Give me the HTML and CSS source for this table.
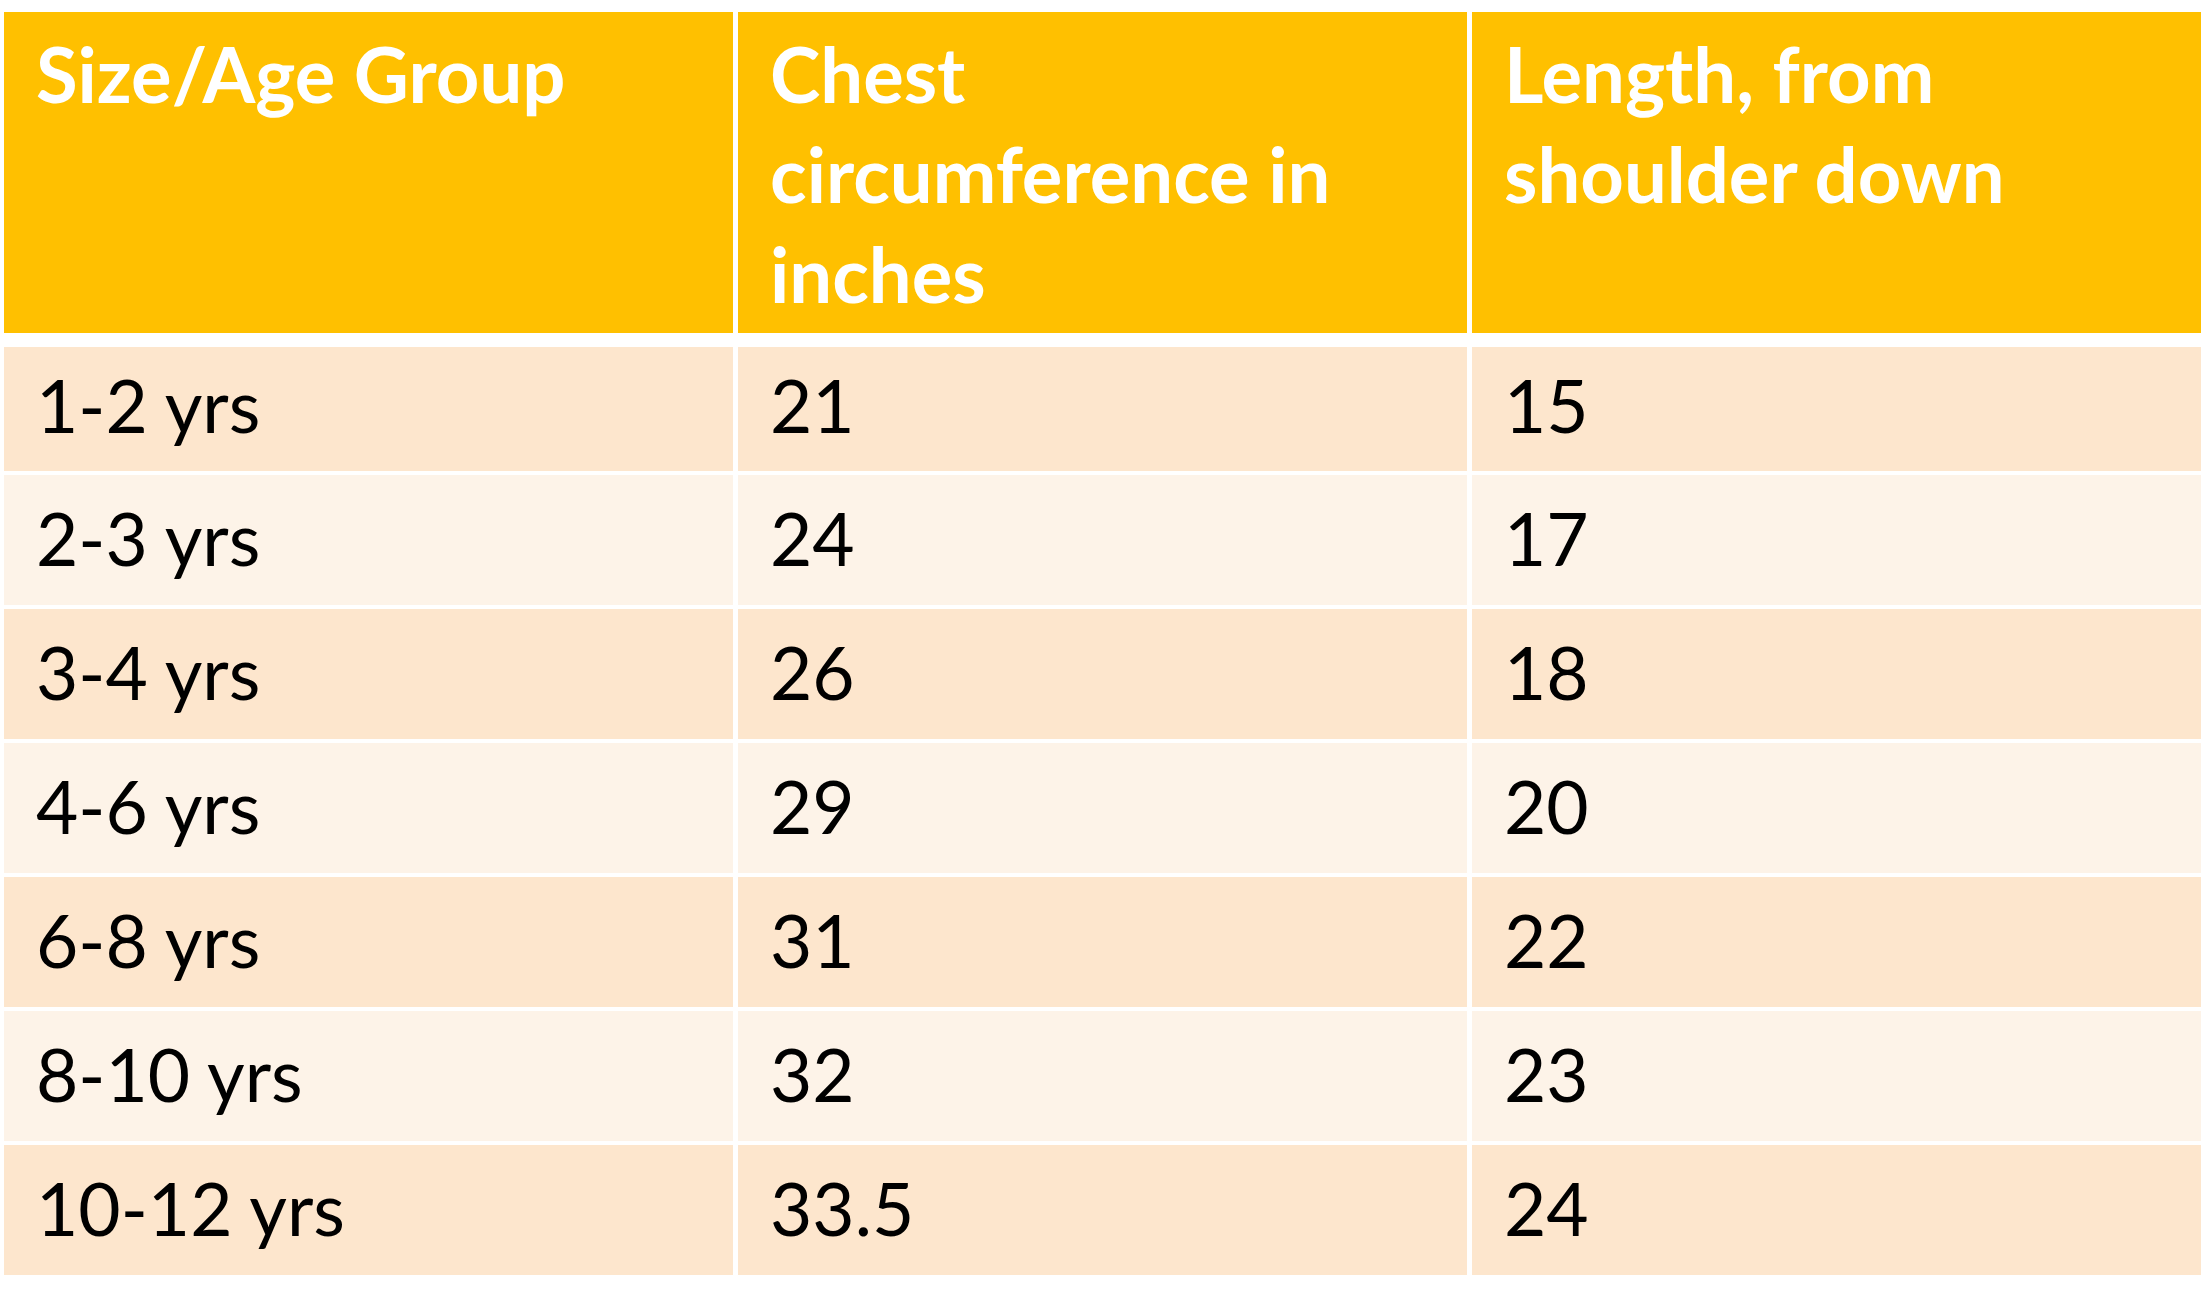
FILE: index.html
```html
<!DOCTYPE html>
<html lang="en">
<head>
<meta charset="utf-8">
<title>Size Chart</title>
<link rel="stylesheet" href="styles.css">
</head>
<body>
<div class="chart">
  <div class="head">
    <div class="hcell">Size/Age Group</div>
    <div class="hcell">Chest<br>circumference in<br>inches</div>
    <div class="hcell">Length, from<br>shoulder down</div>
  </div>
  <div class="body">
    <div class="row odd first"><div class="cell">1-2 yrs</div><div class="cell">21</div><div class="cell">15</div></div>
    <div class="row even"><div class="cell">2-3 yrs</div><div class="cell">24</div><div class="cell">17</div></div>
    <div class="row odd"><div class="cell">3-4 yrs</div><div class="cell">26</div><div class="cell">18</div></div>
    <div class="row even"><div class="cell">4-6 yrs</div><div class="cell">29</div><div class="cell">20</div></div>
    <div class="row odd"><div class="cell">6-8 yrs</div><div class="cell">31</div><div class="cell">22</div></div>
    <div class="row even"><div class="cell">8-10 yrs</div><div class="cell">32</div><div class="cell">23</div></div>
    <div class="row odd"><div class="cell">10-12 yrs</div><div class="cell">33.5</div><div class="cell">24</div></div>
  </div>
</div>
</body>
</html>
```
FILE: styles.css
```css
html, body {
  margin: 0;
  padding: 0;
  background: #ffffff;
}
body {
  font-family: "Lato", "Open Sans", sans-serif;
}
.chart {
  padding: 12px 0 0 4px;
  width: 2197px;
}
.head {
  display: grid;
  grid-template-columns: repeat(3, 1fr);
  column-gap: 5px;
  margin-bottom: 14px;
}
.hcell {
  background: #ffc000;
  color: #ffffff;
  font-weight: 700;
  font-size: 76px;
  line-height: 100px;
  height: 321px;
  box-sizing: border-box;
  padding: 12px 20px 0 32px;
  white-space: nowrap;
}
.body {
  display: flex;
  flex-direction: column;
  gap: 4px;
}
.row {
  display: grid;
  grid-template-columns: repeat(3, 1fr);
  column-gap: 5px;
}
.cell {
  height: 130px;
  box-sizing: border-box;
  line-height: 126px;
  padding: 0 30px 4px 32px;
  font-size: 73px;
  color: #000000;
}
.first .cell {
  height: 124px;
  line-height: 116px;
  padding-bottom: 8px;
}
.odd .cell {
  background: #fde6cd;
}
.even .cell {
  background: #fdf3e8;
}
```
